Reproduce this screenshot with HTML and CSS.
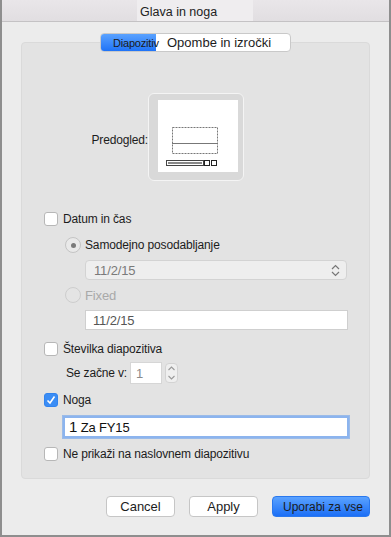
FILE: index.html
```html
<!DOCTYPE html>
<html lang="sl">
<head>
    <meta charset="UTF-8">
    <meta name="viewport" content="width=device-width, initial-scale=1.0">
    <title>Glava in noga</title>
    <link rel="stylesheet" href="styles.css">
</head>
<body>
    <div class="window">
        <div class="titlebar">
            <span class="title">Glava in noga</span>
        </div>

        <div class="content">
            <div class="tabs">
                <div class="tab active">Diapozitiv</div>
                <div class="tab">Opombe in izročki</div>
            </div>

            <div class="group">
                <div class="preview-row">
                    <span class="preview-label">Predogled:</span>
                    <div class="preview">
                        <svg width="80" height="72" viewBox="0 0 80 72">
                            <rect x="14.5" y="27.5" width="45" height="26" fill="none" stroke="#777" stroke-dasharray="2 1"/>
                            <line x1="14" y1="43.5" x2="60" y2="43.5" stroke="#777"/>
                            <rect x="8.5" y="60.5" width="37" height="5" fill="#fff" stroke="#444"/>
                            <rect x="10" y="62" width="34" height="2" fill="#888"/>
                            <rect x="46.5" y="60.5" width="5" height="5" fill="#fff" stroke="#222"/>
                            <rect x="53.5" y="60.5" width="5" height="5" fill="#fff" stroke="#222"/>
                        </svg>
                    </div>
                </div>

                <label class="check-row date-row">
                    <span class="checkbox"></span>
                    Datum in čas
                </label>

                <div class="radio-row auto-row">
                    <span class="radio selected"></span>
                    Samodejno posodabljanje
                </div>

                <div class="select">
                    <span>11/2/15</span>
                    <svg width="9" height="13" viewBox="0 0 9 13">
                        <path d="M1 5 L4.5 1.5 L8 5 M1 8 L4.5 11.5 L8 8" fill="none" stroke="#777" stroke-width="1.2"/>
                    </svg>
                </div>

                <div class="radio-row fixed-row disabled">
                    <span class="radio"></span>
                    Fixed
                </div>

                <div class="text-field date-field">11/2/15</div>

                <label class="check-row number-row">
                    <span class="checkbox"></span>
                    Številka diapozitiva
                </label>

                <div class="start-row">
                    <span>Se začne v:</span>
                    <div class="number-field">1</div>
                    <div class="stepper">
                        <svg width="9" height="18" viewBox="0 0 9 18">
                            <path d="M1.5 6 L4.5 3 L7.5 6 M1.5 12 L4.5 15 L7.5 12" fill="none" stroke="#999" stroke-width="1.1"/>
                        </svg>
                    </div>
                </div>

                <label class="check-row footer-row">
                    <span class="checkbox checked">
                        <svg width="10" height="10" viewBox="0 0 10 10">
                            <path d="M1.5 5.5 L4 8 L8.5 1.5" fill="none" stroke="#fff" stroke-width="1.6"/>
                        </svg>
                    </span>
                    Noga
                </label>

                <div class="text-field footer-field"><span class="big">1</span> Za FY15</div>

                <label class="check-row title-row">
                    <span class="checkbox"></span>
                    Ne prikaži na naslovnem diapozitivu
                </label>
            </div>

            <div class="buttons">
                <button class="btn">Cancel</button>
                <button class="btn">Apply</button>
                <button class="btn primary">Uporabi za vse</button>
            </div>
        </div>
    </div>
</body>
</html>
```

FILE: styles.css
```css
* {
    margin: 0;
    padding: 0;
    box-sizing: border-box;
}

body {
    font-family: 'Liberation Sans', Arial, sans-serif;
    font-size: 12px;
    letter-spacing: -0.15px;
    color: #1c1c1c;
    background: #ececec;
}

.window {
    width: 391px;
    height: 537px;
    background: #ececec;
    border-left: 2px solid #8e8e8e;
    border-right: 2px solid #8e8e8e;
    border-bottom: 2px solid #8e8e8e;
}

.titlebar {
    height: 22px;
    background: linear-gradient(#e9e6e9, #e1dee1);
    border-bottom: 1px solid #c4c2c4;
    padding-left: 135px;
}

.title {
    display: inline-block;
    width: 116px;
    height: 21px;
    line-height: 24px;
    padding-left: 3px;
    background: #efedef;
    color: #222;
    font-size: 12.5px;
    letter-spacing: 0;
}

.content {
    padding: 11px 19px 0 19px;
}

.tabs {
    display: flex;
    width: 191px;
    height: 19px;
    margin: 0 auto -10px;
    position: relative;
    z-index: 1;
    background: #fff;
    border: 1px solid #c9c9c9;
    border-radius: 4px;
    overflow: hidden;
}

.tab {
    line-height: 18px;
    padding-left: 11px;
    font-size: 13px;
    letter-spacing: 0;
    white-space: nowrap;
}

.tab.active {
    flex: none;
    width: 55px;
    padding-left: 12px;
    background: linear-gradient(#5aa2ff, #1f73f7);
    color: #1a1a1a;
    font-size: 11px;
    letter-spacing: -0.2px;
    overflow: visible;
}

.group {
    height: 437px;
    background: #e3e3e3;
    border: 1px solid #dadada;
    border-radius: 4px;
    padding: 50px 0 0 22px;
}

.preview-row {
    display: flex;
    align-items: center;
    padding-left: 24px;
}

.preview-label {
    width: 80px;
    text-align: right;
    padding-top: 6px;
}

.preview {
    width: 96px;
    height: 88px;
    background: #d9d9d9;
    border: 1px solid #f4f4f4;
    border-radius: 6px;
    padding: 6px 0 0 9px;
}

.preview svg {
    display: block;
    background: #fff;
}

.check-row,
.radio-row {
    display: flex;
    align-items: center;
    gap: 5px;
    height: 18px;
}

.checkbox {
    display: inline-flex;
    align-items: center;
    justify-content: center;
    width: 14px;
    height: 14px;
    background: #fff;
    border: 1px solid #b7b7b7;
    border-radius: 3px;
}

.checkbox.checked {
    background: #3b8df5;
    border-color: #3183ee;
}

.date-row {
    margin-top: 29px;
}

.radio-row {
    padding-left: 21px;
    gap: 4px;
}

.radio {
    width: 16px;
    height: 16px;
    border-radius: 50%;
    border: 1px solid #c4c4c4;
    background: #e9e9e9;
    position: relative;
}

.radio.selected::after {
    content: '';
    position: absolute;
    left: 5px;
    top: 5px;
    width: 5px;
    height: 5px;
    border-radius: 50%;
    background: #7a7a7a;
}

.auto-row {
    margin-top: 8px;
}

.select {
    display: flex;
    align-items: center;
    justify-content: space-between;
    width: 262px;
    height: 20px;
    margin: 6px 0 0 41px;
    padding: 0 6px 0 8px;
    background: #eeeeee;
    border: 1px solid #d3d3d3;
    border-radius: 4px;
    color: #7a7a7a;
    font-size: 13px;
}

.fixed-row {
    margin-top: 6px;
    font-size: 13px;
}

.disabled {
    color: #a9a9a9;
}

.disabled .radio {
    background: #e4e4e4;
    border-color: #cdcdcd;
}

.text-field {
    background: #fff;
    border: 1px solid #cfcfcf;
}

.date-field {
    width: 263px;
    height: 20px;
    margin: 6px 0 0 41px;
    padding-left: 7px;
    line-height: 19px;
    color: #555;
    font-size: 13px;
}

.number-row {
    margin-top: 10px;
}

.start-row {
    display: flex;
    align-items: center;
    height: 22px;
    margin-top: 4px;
    padding-left: 22px;
}

.number-field {
    width: 32px;
    height: 22px;
    margin-left: 3px;
    padding-left: 5px;
    line-height: 21px;
    background: #fff;
    border: 1px solid #d6d6d6;
    color: #8a8a8a;
    font-size: 13px;
}

.stepper {
    width: 13px;
    height: 20px;
    margin-left: 3px;
    background: #efefef;
    border: 1px solid #d3d3d3;
    border-radius: 4px;
    display: flex;
    justify-content: center;
    align-items: center;
}

.footer-row {
    margin-top: 7px;
}

.footer-field {
    width: 288px;
    height: 24px;
    margin: 6px 0 0 18px;
    padding-left: 6px;
    line-height: 21px;
    border: 1px solid #9bbbe8;
    box-shadow: 0 0 0 2px #8cb4ee inset;
    color: #111;
    font-size: 13px;
}

.big {
    font-size: 15px;
}

.title-row {
    margin-top: 6px;
}

.buttons {
    display: flex;
    justify-content: flex-end;
    gap: 14px;
    margin-top: 17px;
}

.btn {
    font-family: 'Liberation Sans', Arial, sans-serif;
    font-size: 13px;
    height: 21px;
    width: 69px;
    background: #fff;
    border: 1px solid #c6c6c6;
    border-radius: 4px;
    color: #1c1c1c;
}

.btn.primary {
    width: 98px;
    background: linear-gradient(#5aa2ff, #1c6ff6);
    border-color: #2a78ee;
    padding-left: 4px;
    font-size: 12px;
}
```
